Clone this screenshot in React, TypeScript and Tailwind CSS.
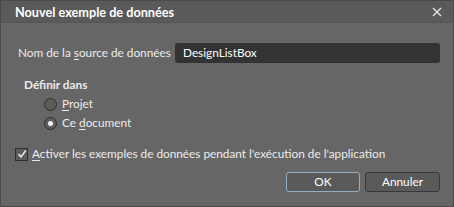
import React from "react";

function Radio({ checked }: { checked?: boolean }) {
  return (
    <span className="relative flex h-[13px] w-[13px] items-center justify-center rounded-full border border-[#2e2e2e] bg-[#5c5c5c]">
      {checked && <span className="h-[5px] w-[5px] rounded-full bg-[#f2f2f2]" />}
    </span>
  );
}

export default function App() {
  return (
    <div
      className="flex h-[207px] w-[454px] flex-col border border-[#4a4a4a] bg-[#666666] text-[11.8px] leading-[16px] text-[#ececec]"
      style={{ fontFamily: 'Lato, "Liberation Sans", Arial, sans-serif' }}
    >
      <div className="flex h-[22px] items-center justify-between border-b border-[#555555] bg-[#5a5a5a] pl-[14px] pr-[11px]">
        <span className="text-[12.7px] font-bold text-white">Nouvel exemple de données</span>
        <svg width="10" height="10" viewBox="0 0 10 10" className="mt-[1px]">
          <path d="M1 1 L9 9 M9 1 L1 9" stroke="#e8e8e8" strokeWidth="1.3" />
        </svg>
      </div>
      <div className="flex flex-1 flex-col pl-[17px] pr-[13px]">
        <div className="mt-[20px] flex items-center">
          <span className="w-[157px]">
            Nom de la <span className="underline underline-offset-2">s</span>ource de données
          </span>
          <div className="flex h-[20px] flex-1 items-center rounded-[3px] bg-[#333333] pl-[8px] text-white">
            DesignListBox
          </div>
        </div>
        <div className="ml-[6px] mt-[14px] font-bold">Définir dans</div>
        <div className="ml-[26px] mt-[3px] flex items-center gap-[5px]">
          <Radio />
          <span>
            <span className="underline underline-offset-2">P</span>rojet
          </span>
        </div>
        <div className="ml-[26px] mt-[3px] flex items-center gap-[5px]">
          <Radio checked />
          <span>
            Ce <span className="underline underline-offset-2">d</span>ocument
          </span>
        </div>
        <div className="-ml-[3px] mt-[15px] flex items-center gap-[4px]">
          <span className="flex h-[13px] w-[13px] items-center justify-center border border-[#2e2e2e] bg-[#5c5c5c]">
            <svg width="10" height="10" viewBox="0 0 10 10">
              <path d="M1.5 5 L4 7.8 L8.8 1.5" stroke="#f2f2f2" strokeWidth="1.4" fill="none" />
            </svg>
          </span>
          <span>
            <span className="underline underline-offset-2">A</span>ctiver les exemples de données pendant l'exécution de l'application
          </span>
        </div>
        <div className="mt-[10px] flex justify-end gap-[5px]">
          <button className="h-[20px] w-[74px] rounded-[3px] border border-[#94aec6] bg-[#5a5a5a] text-white">OK</button>
          <button className="h-[20px] w-[75px] rounded-[3px] border border-[#383838] bg-[#5a5a5a] text-white">Annuler</button>
        </div>
      </div>
    </div>
  );
}
